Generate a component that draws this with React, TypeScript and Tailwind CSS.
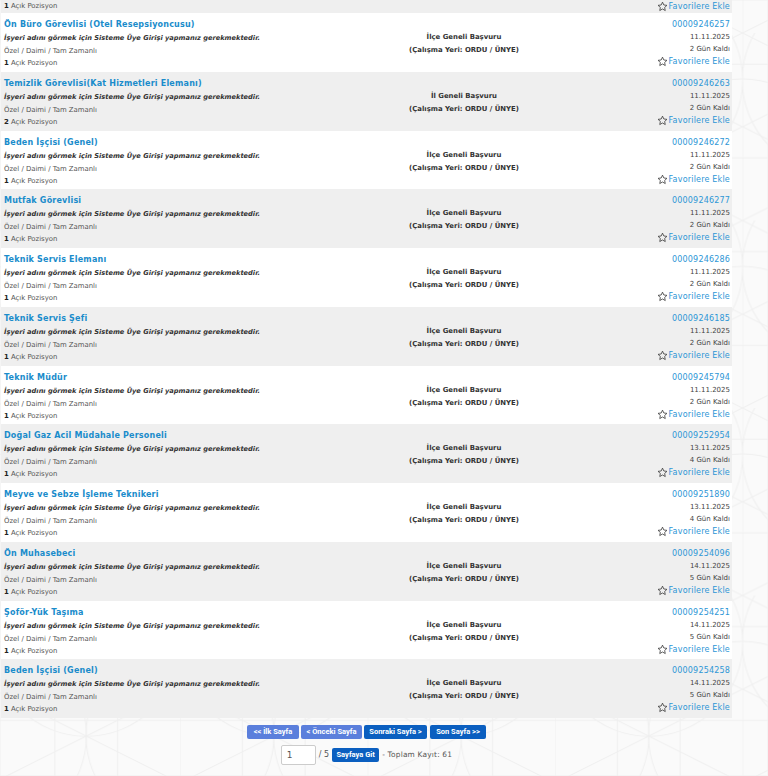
const jobs = [
  { title: 'Ön Büro Görevlisi (Otel Resepsiyoncusu)', scope: 'İlçe Geneli Başvuru', count: 1, no: '00009246257', date: '11.11.2025', left: '2 Gün Kaldı' },
  { title: 'Temizlik Görevlisi(Kat Hizmetleri Elemanı)', scope: 'İl Geneli Başvuru', count: 2, no: '00009246263', date: '11.11.2025', left: '2 Gün Kaldı' },
  { title: 'Beden İşçisi (Genel)', scope: 'İlçe Geneli Başvuru', count: 1, no: '00009246272', date: '11.11.2025', left: '2 Gün Kaldı' },
  { title: 'Mutfak Görevlisi', scope: 'İlçe Geneli Başvuru', count: 1, no: '00009246277', date: '11.11.2025', left: '2 Gün Kaldı' },
  { title: 'Teknik Servis Elemanı', scope: 'İlçe Geneli Başvuru', count: 1, no: '00009246286', date: '11.11.2025', left: '2 Gün Kaldı' },
  { title: 'Teknik Servis Şefi', scope: 'İlçe Geneli Başvuru', count: 1, no: '00009246185', date: '11.11.2025', left: '2 Gün Kaldı' },
  { title: 'Teknik Müdür', scope: 'İlçe Geneli Başvuru', count: 1, no: '00009245794', date: '11.11.2025', left: '2 Gün Kaldı' },
  { title: 'Doğal Gaz Acil Müdahale Personeli', scope: 'İlçe Geneli Başvuru', count: 1, no: '00009252954', date: '13.11.2025', left: '4 Gün Kaldı' },
  { title: 'Meyve ve Sebze İşleme Teknikeri', scope: 'İlçe Geneli Başvuru', count: 1, no: '00009251890', date: '13.11.2025', left: '4 Gün Kaldı' },
  { title: 'Ön Muhasebeci', scope: 'İlçe Geneli Başvuru', count: 1, no: '00009254096', date: '14.11.2025', left: '5 Gün Kaldı' },
  { title: 'Şoför-Yük Taşıma', scope: 'İlçe Geneli Başvuru', count: 1, no: '00009254251', date: '14.11.2025', left: '5 Gün Kaldı' },
  { title: 'Beden İşçisi (Genel)', scope: 'İlçe Geneli Başvuru', count: 1, no: '00009254258', date: '14.11.2025', left: '5 Gün Kaldı' },
];

const Star = () => (
  <svg width="11" height="11" viewBox="0 0 24 24" fill="none" stroke="#333" strokeWidth="1.7" className="mr-[1px] shrink-0">
    <path d="M12 2.5l2.9 6.2 6.8.8-5 4.6 1.3 6.7-6-3.4-6 3.4 1.3-6.7-5-4.6 6.8-.8z" />
  </svg>
);

const Favorite = () => (
  <div className="flex items-center justify-end text-[8px] leading-[13px] tracking-[0.2px] text-[#2d96d6]">
    <Star />
    Favorilere Ekle
  </div>
);

const Row = ({ job, grey }: { job: (typeof jobs)[number]; grey: boolean }) => (
  <div className={`grid h-[58.75px] grid-cols-[300px_320px_1fr] pl-[3px] pr-[2px] pt-[5px] ${grey ? 'bg-[#efefef]' : 'bg-white'}`}>
    <div>
      <div className="text-[8px] font-bold leading-[14px] tracking-[0.2px] text-[#1a8ccb]">{job.title}</div>
      <div className="mb-[1px] text-[6.65px] font-bold italic leading-[12px] text-[#333]">İşyeri adını görmek için Sisteme Üye Girişi yapmanız gerekmektedir.</div>
      <div className="text-[6.9px] leading-[12px] text-[#555]">Özel / Daimi / Tam Zamanlı</div>
      <div className="text-[6.9px] leading-[13px] text-[#555]"><b className="text-[#222]">{job.count}</b> Açık Pozisyon</div>
    </div>
    <div className="pt-[13px] text-center text-[6.9px] font-bold leading-[13px] text-[#333]">
      <div>{job.scope}</div>
      <div>(Çalışma Yeri: ORDU / ÜNYE)</div>
    </div>
    <div className="text-right">
      <div className="text-[8px] leading-[13px] tracking-[0.18px] text-[#2d96d6]">{job.no}</div>
      <div className="text-[7px] leading-[12px] text-[#444]">{job.date}</div>
      <div className="text-[7px] leading-[12px] text-[#444]">{job.left}</div>
      <Favorite />
    </div>
  </div>
);

const PageButton = ({ label, className }: { label: string; className: string }) => (
  <button className={`h-[14px] rounded-[2px] text-center font-['Roboto',sans-serif] text-[7.5px] font-bold leading-[14px] text-white ${className}`}>
    {label}
  </button>
);

const App = () => {
  return (
    <div className="relative h-[776px] w-[768px] overflow-hidden bg-[#fafafa] font-['DejaVu_Sans',sans-serif]">
      <svg className="absolute inset-0" width="768" height="776" fill="none" stroke="#efefef" strokeWidth="1">
        <defs>
          <pattern id="bg" width="187.5" height="187.5" patternUnits="userSpaceOnUse" x="-7.5" y="33">
            <path d="M0 0V187.5M62.5 0V187.5M125 0V187.5M0 31.25H187.5M0 125H187.5" />
            <path d="M0 0L187.5 93.75M0 93.75L187.5 187.5M0 -93.75L187.5 0M0 0L187.5 -93.75M0 93.75L187.5 0M0 187.5L187.5 93.75M0 281.25L187.5 187.5" />
            <circle cx="93.75" cy="46.875" r="94" />
            <circle cx="0" cy="140" r="94" />
            <circle cx="187.5" cy="140" r="94" />
          </pattern>
        </defs>
        <rect width="768" height="776" fill="url(#bg)" />
      </svg>
      <div className="relative w-[733px]">
        <div className="ml-[1px] w-[731px]">
          <div className="flex h-[13px] items-end justify-between bg-[#efefef] pl-[3px] pr-[2px]">
            <div className="text-[6.9px] leading-[13px] text-[#555]"><b className="text-[#222]">1</b> Açık Pozisyon</div>
            <Favorite />
          </div>
          {jobs.map((job, i) => (
            <Row key={job.no} job={job} grey={i % 2 === 1} />
          ))}
        </div>
        <div className="mt-[7px] flex justify-center">
          <PageButton label="<< İlk Sayfa" className="w-[52px] bg-[#5b7fdc]" />
          <PageButton label="< Önceki Sayfa" className="ml-[2px] w-[61px] bg-[#5b7fdc]" />
          <PageButton label="Sonraki Sayfa >" className="ml-[2px] w-[63px] bg-[#0b5fc0]" />
          <PageButton label="Son Sayfa >>" className="ml-[3px] w-[56px] bg-[#0b5fc0]" />
        </div>
        <div className="mt-[6px] flex items-center justify-center text-[7.4px] text-[#555]">
          <input defaultValue="1" className="h-[20px] w-[35px] rounded-[2px] border border-[#ccc] bg-white px-[5px] text-[9px] text-[#555]" />
          <span className="ml-[3px] text-[8px]">/ 5</span>
          <button className="ml-[3px] h-[14px] w-[47px] rounded-[2px] bg-[#0b5fc0] font-['Roboto',sans-serif] text-[7.5px] font-bold leading-[14px] text-white">Sayfaya Git</button>
          <span className="ml-[3px] tracking-[0.2px]">- Toplam Kayıt: 61</span>
        </div>
      </div>
    </div>
  );
};

export default App;
